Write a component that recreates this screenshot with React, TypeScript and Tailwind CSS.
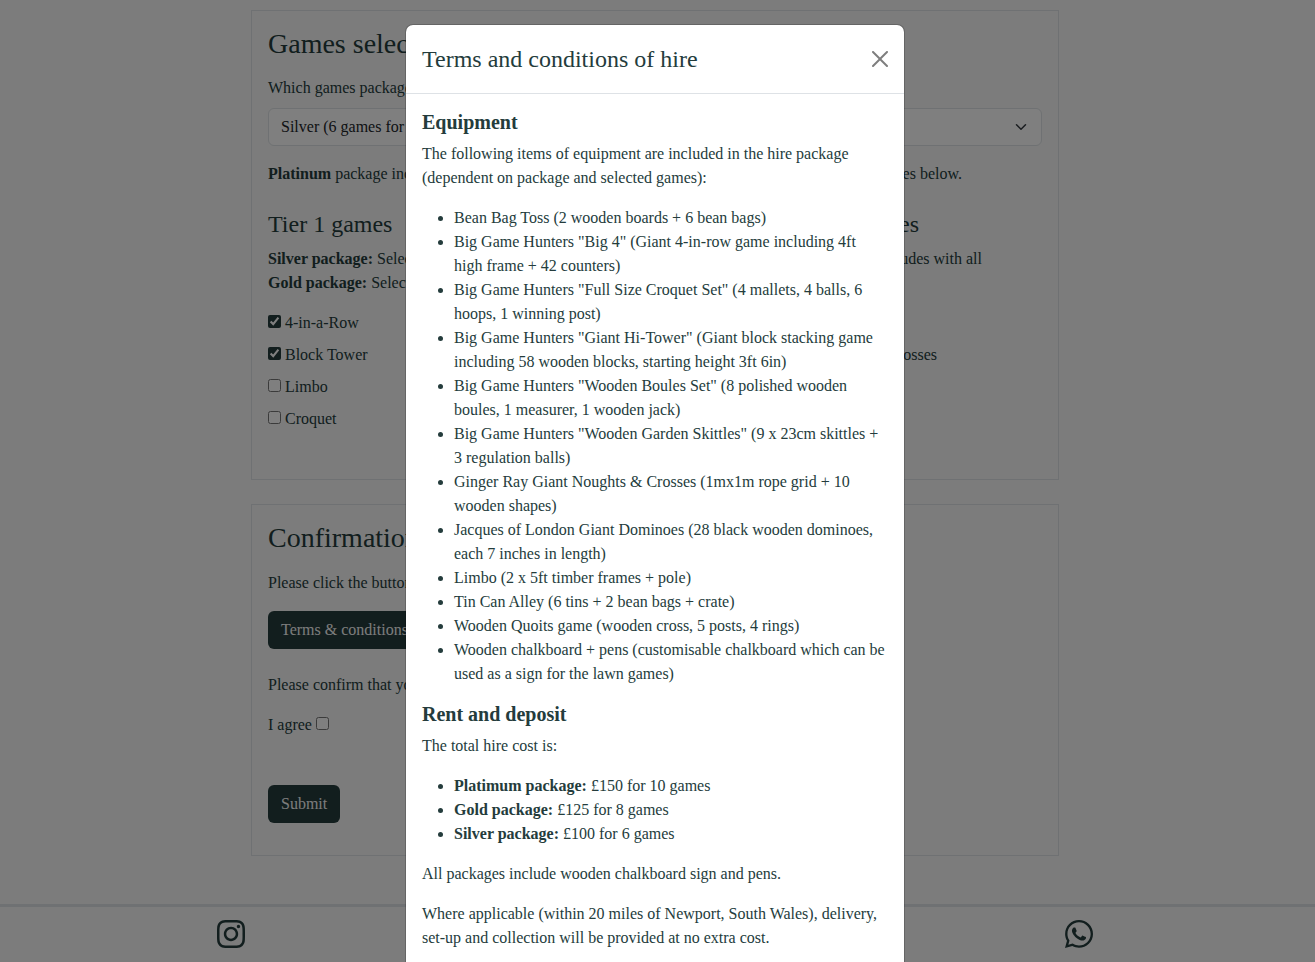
import React from "react";
import { FaInstagram, FaWhatsapp } from "react-icons/fa6";

const equipment = [
  "Bean Bag Toss (2 wooden boards + 6 bean bags)",
  'Big Game Hunters "Big 4" (Giant 4-in-row game including 4ft high frame + 42 counters)',
  'Big Game Hunters "Full Size Croquet Set" (4 mallets, 4 balls, 6 hoops, 1 winning post)',
  'Big Game Hunters "Giant Hi-Tower" (Giant block stacking game including 58 wooden blocks, starting height 3ft 6in)',
  'Big Game Hunters "Wooden Boules Set" (8 polished wooden boules, 1 measurer, 1 wooden jack)',
  'Big Game Hunters "Wooden Garden Skittles" (9 x 23cm skittles + 3 regulation balls)',
  "Ginger Ray Giant Noughts & Crosses (1mx1m rope grid + 10 wooden shapes)",
  "Jacques of London Giant Dominoes (28 black wooden dominoes, each 7 inches in length)",
  "Limbo (2 x 5ft timber frames + pole)",
  "Tin Can Alley (6 tins + 2 bean bags + crate)",
  "Wooden Quoits game (wooden cross, 5 posts, 4 rings)",
  "Wooden chalkboard + pens (customisable chalkboard which can be used as a sign for the lawn games)",
];

const prices = [
  ["Platimum package:", "£150 for 10 games"],
  ["Gold package:", "£125 for 8 games"],
  ["Silver package:", "£100 for 6 games"],
];

function Box({ checked = false }: { checked?: boolean }) {
  return (
    <input
      type="checkbox"
      defaultChecked={checked}
      className="inline-block size-[13px] align-baseline accent-[#243c3c]"
    />
  );
}

function Option({ label, checked = false }: { label: string; checked?: boolean }) {
  return (
    <div className="mb-2 h-6">
      <Box checked={checked} /> {label}
    </div>
  );
}

function Page() {
  return (
    <div className="flex h-[962px] flex-col overflow-hidden bg-[#f8f8f8] pt-2.5">
      <main className="ml-[251px] w-[808px] grow">
        <section className="h-[470px] border border-[#dee2e6] px-4 pt-4">
          <h2 className="text-[28px] leading-[34px]">Games selection</h2>
          <p className="mt-[15px] mb-2">Which games package would you like?</p>
          <div className="flex h-[38px] items-center justify-between rounded-md border border-[#dee2e6] bg-white pr-3 pl-3 text-[#212529]">
            <span>Silver (6 games for £100)</span>
            <svg viewBox="0 0 16 16" className="h-3 w-4" fill="none" stroke="#343a40" strokeLinecap="round" strokeLinejoin="round" strokeWidth="2">
              <path d="m2 5 6 6 6-6" />
            </svg>
          </div>
          <div className="mt-4 flex h-6 justify-between whitespace-nowrap">
            <span><b>Platinum</b> package includes all of the games</span>
            <span className="mr-20">Please select your games below.</span>
          </div>
          <div className="mt-6 flex justify-between">
            <div>
              <h3 className="mb-2 text-2xl leading-[29px]">Tier 1 games</h3>
              <p className="mb-4"><b>Silver package:</b> Select 2 games<br /><b>Gold package:</b> Select 3 games</p>
              <Option label="4-in-a-Row" checked />
              <Option label="Block Tower" checked />
              <Option label="Limbo" />
              <Option label="Croquet" />
            </div>
            <div className="mr-[60px] w-[190px]">
              <h3 className="mr-[63px] mb-2 text-right text-2xl leading-[29px]">Tier 3 games</h3>
              <p className="mb-[72px] text-right">Includes with all</p>
              <p className="mr-[45px] text-right">Noughts &amp; Crosses</p>
            </div>
          </div>
        </section>
        <section className="mt-6 h-[352px] border border-[#dee2e6] px-4 pt-4">
          <h2 className="text-[28px] leading-[34px]">Confirmation</h2>
          <p className="mt-4">Please click the button below to read our terms.</p>
          <button className="mt-4 block h-[38px] rounded-md bg-[#243c3c] px-[13px] text-[#f8f8f8]">Terms &amp; conditions of hire</button>
          <p className="mt-6">Please confirm that you agree to the terms.</p>
          <p className="mt-4">I agree <Box /></p>
          <button className="mt-12 block h-[38px] rounded-md bg-[#243c3c] px-[13px] text-[#f8f8f8]">Submit</button>
        </section>
      </main>
      <footer className="flex h-[58px] items-start justify-between border-t-3 border-[#dee2e6] px-[217px] pt-[11px] text-[#243c3c]">
        <FaInstagram className="h-8 w-7" />
        <FaWhatsapp className="mr-[5px] h-8 w-7" />
      </footer>
    </div>
  );
}

export default function App() {
  return (
    <div className="relative h-[962px] overflow-hidden font-['Liberation_Serif',serif] text-base leading-6 text-[#243c3c]">
      <Page />
      <div className="absolute inset-0 flex items-start justify-center overflow-hidden bg-black/50 pt-6">
        <div role="dialog" className="mr-[5px] h-[1300px] w-[500px] shrink-0 rounded-lg border border-black/18 bg-white bg-clip-padding">
          <header className="flex h-[69px] items-center justify-between border-b border-[#dee2e6] px-4">
            <h1 className="text-2xl leading-9">Terms and conditions of hire</h1>
            <svg viewBox="0 0 16 16" className="size-4 opacity-50" fill="#000">
              <path d="M.293.293a1 1 0 0 1 1.414 0L8 6.586 14.293.293a1 1 0 1 1 1.414 1.414L9.414 8l6.293 6.293a1 1 0 0 1-1.414 1.414L8 9.414l-6.293 6.293a1 1 0 0 1-1.414-1.414L6.586 8 .293 1.707a1 1 0 0 1 0-1.414z" />
            </svg>
          </header>
          <div className="p-4">
            <h2 className="mb-2 text-xl leading-6 font-bold">Equipment</h2>
            <p className="mb-4">The following items of equipment are included in the hire package (dependent on package and selected games):</p>
            <ul className="mb-4 list-disc pl-8">
              {equipment.map((item) => <li key={item}>{item}</li>)}
            </ul>
            <h2 className="mb-2 text-xl leading-6 font-bold">Rent and deposit</h2>
            <p className="mb-4">The total hire cost is:</p>
            <ul className="mb-4 list-disc pl-8">
              {prices.map(([name, price]) => <li key={name}><b>{name}</b> {price}</li>)}
            </ul>
            <p className="mb-4">All packages include wooden chalkboard sign and pens.</p>
            <p>Where applicable (within 20 miles of Newport, South Wales), delivery, set-up and collection will be provided at no extra cost.</p>
          </div>
        </div>
      </div>
    </div>
  );
}
